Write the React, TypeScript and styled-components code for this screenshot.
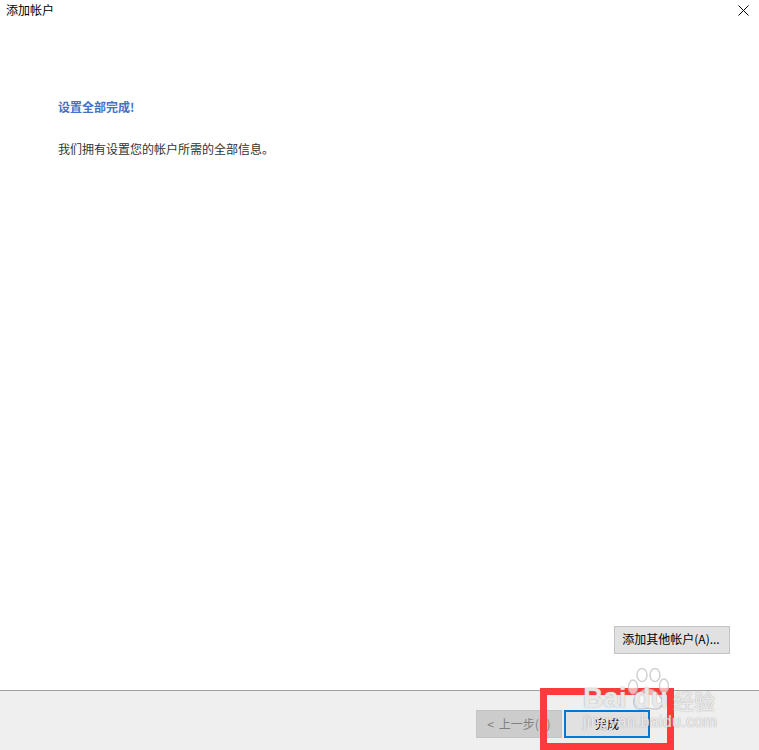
import React from "react";
import styled, { createGlobalStyle } from "styled-components";

const cjk = `"Noto Sans CJK SC", "Liberation Sans", sans-serif`;
const wmEdge = `0 0 1px rgba(130, 130, 130, 0.7), 0 0 2px rgba(170, 170, 170, 0.4)`;

const GlobalStyle = createGlobalStyle`
  html, body {
    margin: 0;
    padding: 0;
    background: #ffffff;
  }
`;

const Dialog = styled.div`
  position: relative;
  width: 759px;
  height: 750px;
  overflow: hidden;
  display: flex;
  flex-direction: column;
  background: #ffffff;
  font-family: ${cjk};
  font-size: 12px;
  color: #000000;
`;

const TitleBar = styled.div`
  height: 20px;
  flex: none;
  display: flex;
  align-items: flex-start;
  justify-content: space-between;
  padding: 2px 10px 0 6px;
  box-sizing: border-box;
  line-height: 16px;
`;

const CloseIcon = styled.svg`
  width: 11px;
  height: 11px;
  margin-top: 3px;
`;

const Body = styled.div`
  flex: 1;
  display: flex;
  flex-direction: column;
  padding: 78px 29px 36px 58px;
`;

const Heading = styled.div`
  font-weight: 700;
  color: #4472c4;
  line-height: 18px;
`;

const Message = styled.div`
  margin-top: 24px;
  color: #333333;
  line-height: 18px;
`;

const Spacer = styled.div`
  flex: 1;
`;

const BodyActions = styled.div`
  display: flex;
  justify-content: flex-end;
`;

const Button = styled.div<{ $state?: "disabled" | "focused" }>`
  height: 28px;
  box-sizing: border-box;
  display: flex;
  align-items: center;
  justify-content: center;
  background: ${({ $state }) => ($state === "disabled" ? "#cccccc" : "#e1e1e1")};
  border: ${({ $state }) => ($state === "focused" ? "2px solid #0078d7" : "1px solid #c4c4c4")};
  color: ${({ $state }) => ($state === "disabled" ? "#808080" : "#000000")};
`;

const AddButton = styled(Button)`
  width: 116px;
  padding: 0 2px 3px 0;
`;

const FooterButton = styled(Button)`
  width: 86px;
  padding-bottom: 2px;
  word-spacing: 2px;
`;

const Footer = styled.div`
  flex: none;
  height: 60px;
  box-sizing: border-box;
  border-top: 1px solid #a0a0a0;
  background: #efefef;
  display: flex;
  justify-content: flex-end;
  gap: 2px;
  padding: 19px 109px 0 0;
`;

const Highlight = styled.div`
  position: absolute;
  left: 540px;
  top: 688px;
  width: 134px;
  height: 62px;
  box-sizing: border-box;
  border: 7px solid #ff3a3a;
`;

const Watermark = styled.div`
  position: absolute;
  left: 581px;
  top: 668px;
  width: 178px;
  height: 82px;
  color: rgba(255, 255, 255, 0.8);
  font-family: "Liberation Sans", sans-serif;
  pointer-events: none;
`;

const WatermarkLogo = styled.div`
  position: absolute;
  left: 2px;
  top: 15px;
  display: flex;
  gap: 7px;
  font-size: 28px;
  font-weight: 700;
  line-height: 30px;
  text-shadow: ${wmEdge};
`;

const WatermarkJing = styled.div`
  position: absolute;
  left: 92px;
  top: 17px;
  font-family: ${cjk};
  font-size: 21px;
  line-height: 30px;
  text-shadow: ${wmEdge};
`;

const WatermarkUrl = styled.div`
  position: absolute;
  left: 2px;
  top: 45px;
  font-size: 16px;
  line-height: 18px;
  letter-spacing: 0.3px;
  text-shadow: ${wmEdge};
`;

const Paw = styled.svg`
  position: absolute;
  left: 46px;
  top: 0;
  width: 42px;
  height: 44px;
`;

export default function App() {
  return (
    <Dialog>
      <GlobalStyle />
      <TitleBar>
        <span>添加帐户</span>
        <CloseIcon viewBox="0 0 11 11">
          <path d="M0.5 0.5L10.5 10.5M10.5 0.5L0.5 10.5" stroke="#000" strokeWidth="1" fill="none" />
        </CloseIcon>
      </TitleBar>
      <Body>
        <Heading>设置全部完成!</Heading>
        <Message>我们拥有设置您的帐户所需的全部信息。</Message>
        <Spacer />
        <BodyActions>
          <AddButton>添加其他帐户(A)...</AddButton>
        </BodyActions>
      </Body>
      <Footer>
        <FooterButton $state="disabled">&lt; 上一步(B)</FooterButton>
        <FooterButton $state="focused">完成</FooterButton>
      </Footer>
      <Highlight />
      <Watermark>
        <Paw viewBox="0 0 42 44" fill="rgba(255,255,255,0.6)" stroke="rgba(190,190,190,0.7)" strokeWidth="1.5">
          <ellipse cx="6" cy="19" rx="4.5" ry="7" />
          <ellipse cx="15" cy="7" rx="5" ry="6.5" />
          <ellipse cx="28" cy="7" rx="5" ry="6.5" />
          <ellipse cx="37" cy="18" rx="4.5" ry="7" />
          <path d="M21 21c6 0 9 4 13 9 3 5 0 12-6 11-5-1-10-1-14 0-6 1-9-6-6-11 4-5 7-9 13-9z" />
        </Paw>
        <WatermarkLogo>
          <span>Bai</span>
          <span>du</span>
        </WatermarkLogo>
        <WatermarkJing>经验</WatermarkJing>
        <WatermarkUrl>jingyan.baidu.com</WatermarkUrl>
      </Watermark>
    </Dialog>
  );
}
